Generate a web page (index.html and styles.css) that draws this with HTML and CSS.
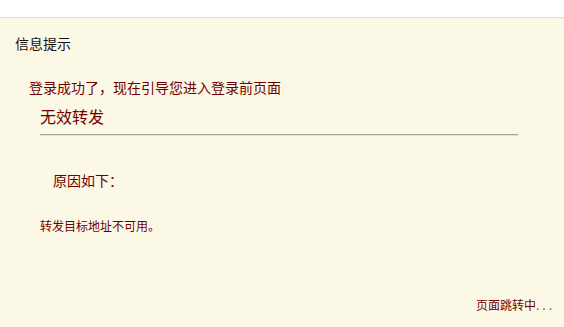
FILE: index.html
```html
<!DOCTYPE html>
<html lang="zh-CN">
<head>
<meta charset="utf-8">
<title>信息提示</title>
<link rel="stylesheet" href="styles.css">
</head>
<body>
<div class="topbar"></div>
<div class="panel">
  <div class="title">信息提示</div>
  <div class="msg">登录成功了，现在引导您进入登录前页面</div>
  <div class="detail">
    <div class="sub">无效转发</div>
    <div class="rule"></div>
    <div class="reason">原因如下：</div>
    <div class="why">转发目标地址不可用。</div>
  </div>
  <div class="jump">页面跳转中<span class="dots">...</span></div>
</div>
</body>
</html>
```

FILE: styles.css
```css
html, body {
  margin: 0;
  padding: 0;
  background: #ffffff;
  height: 100%;
}
body {
  font-family: "Noto Sans CJK SC", "Noto Sans", sans-serif;
  display: flex;
  flex-direction: column;
}
.topbar {
  height: 17px;
  background: #ffffff;
}
.panel {
  flex: 1;
  border-top: 1px solid #dce3d0;
  box-shadow: inset 0 1px 0 #f3f5e6, inset 0 2px 0 #f8f8ea;
  background: #fcf8e6;
  color: #700000;
  display: flex;
  flex-direction: column;
}
.title {
  margin: 15px 0 0 15px;
  font-size: 14px;
  line-height: 20px;
  color: #111111;
}
.msg {
  margin: 24px 0 0 29px;
  font-size: 14px;
  line-height: 20px;
}
.detail {
  margin: 8px 0 0 40px;
  width: 478px;
}
.sub {
  font-size: 16px;
  line-height: 22px;
}
.rule {
  margin-top: 7px;
  border-top: 1px solid #a8a396;
  border-bottom: 1px solid #e6e0cc;
}
.reason {
  margin: 34px 0 0 13px;
  font-size: 14px;
  line-height: 20px;
}
.why {
  margin-top: 27px;
  font-size: 12px;
  line-height: 18px;
}
.jump {
  margin: 61px 9px 0 0;
  align-self: flex-end;
  font-size: 12px;
  line-height: 18px;
}
.dots {
  letter-spacing: 3px;
  color: #555555;
}
```
